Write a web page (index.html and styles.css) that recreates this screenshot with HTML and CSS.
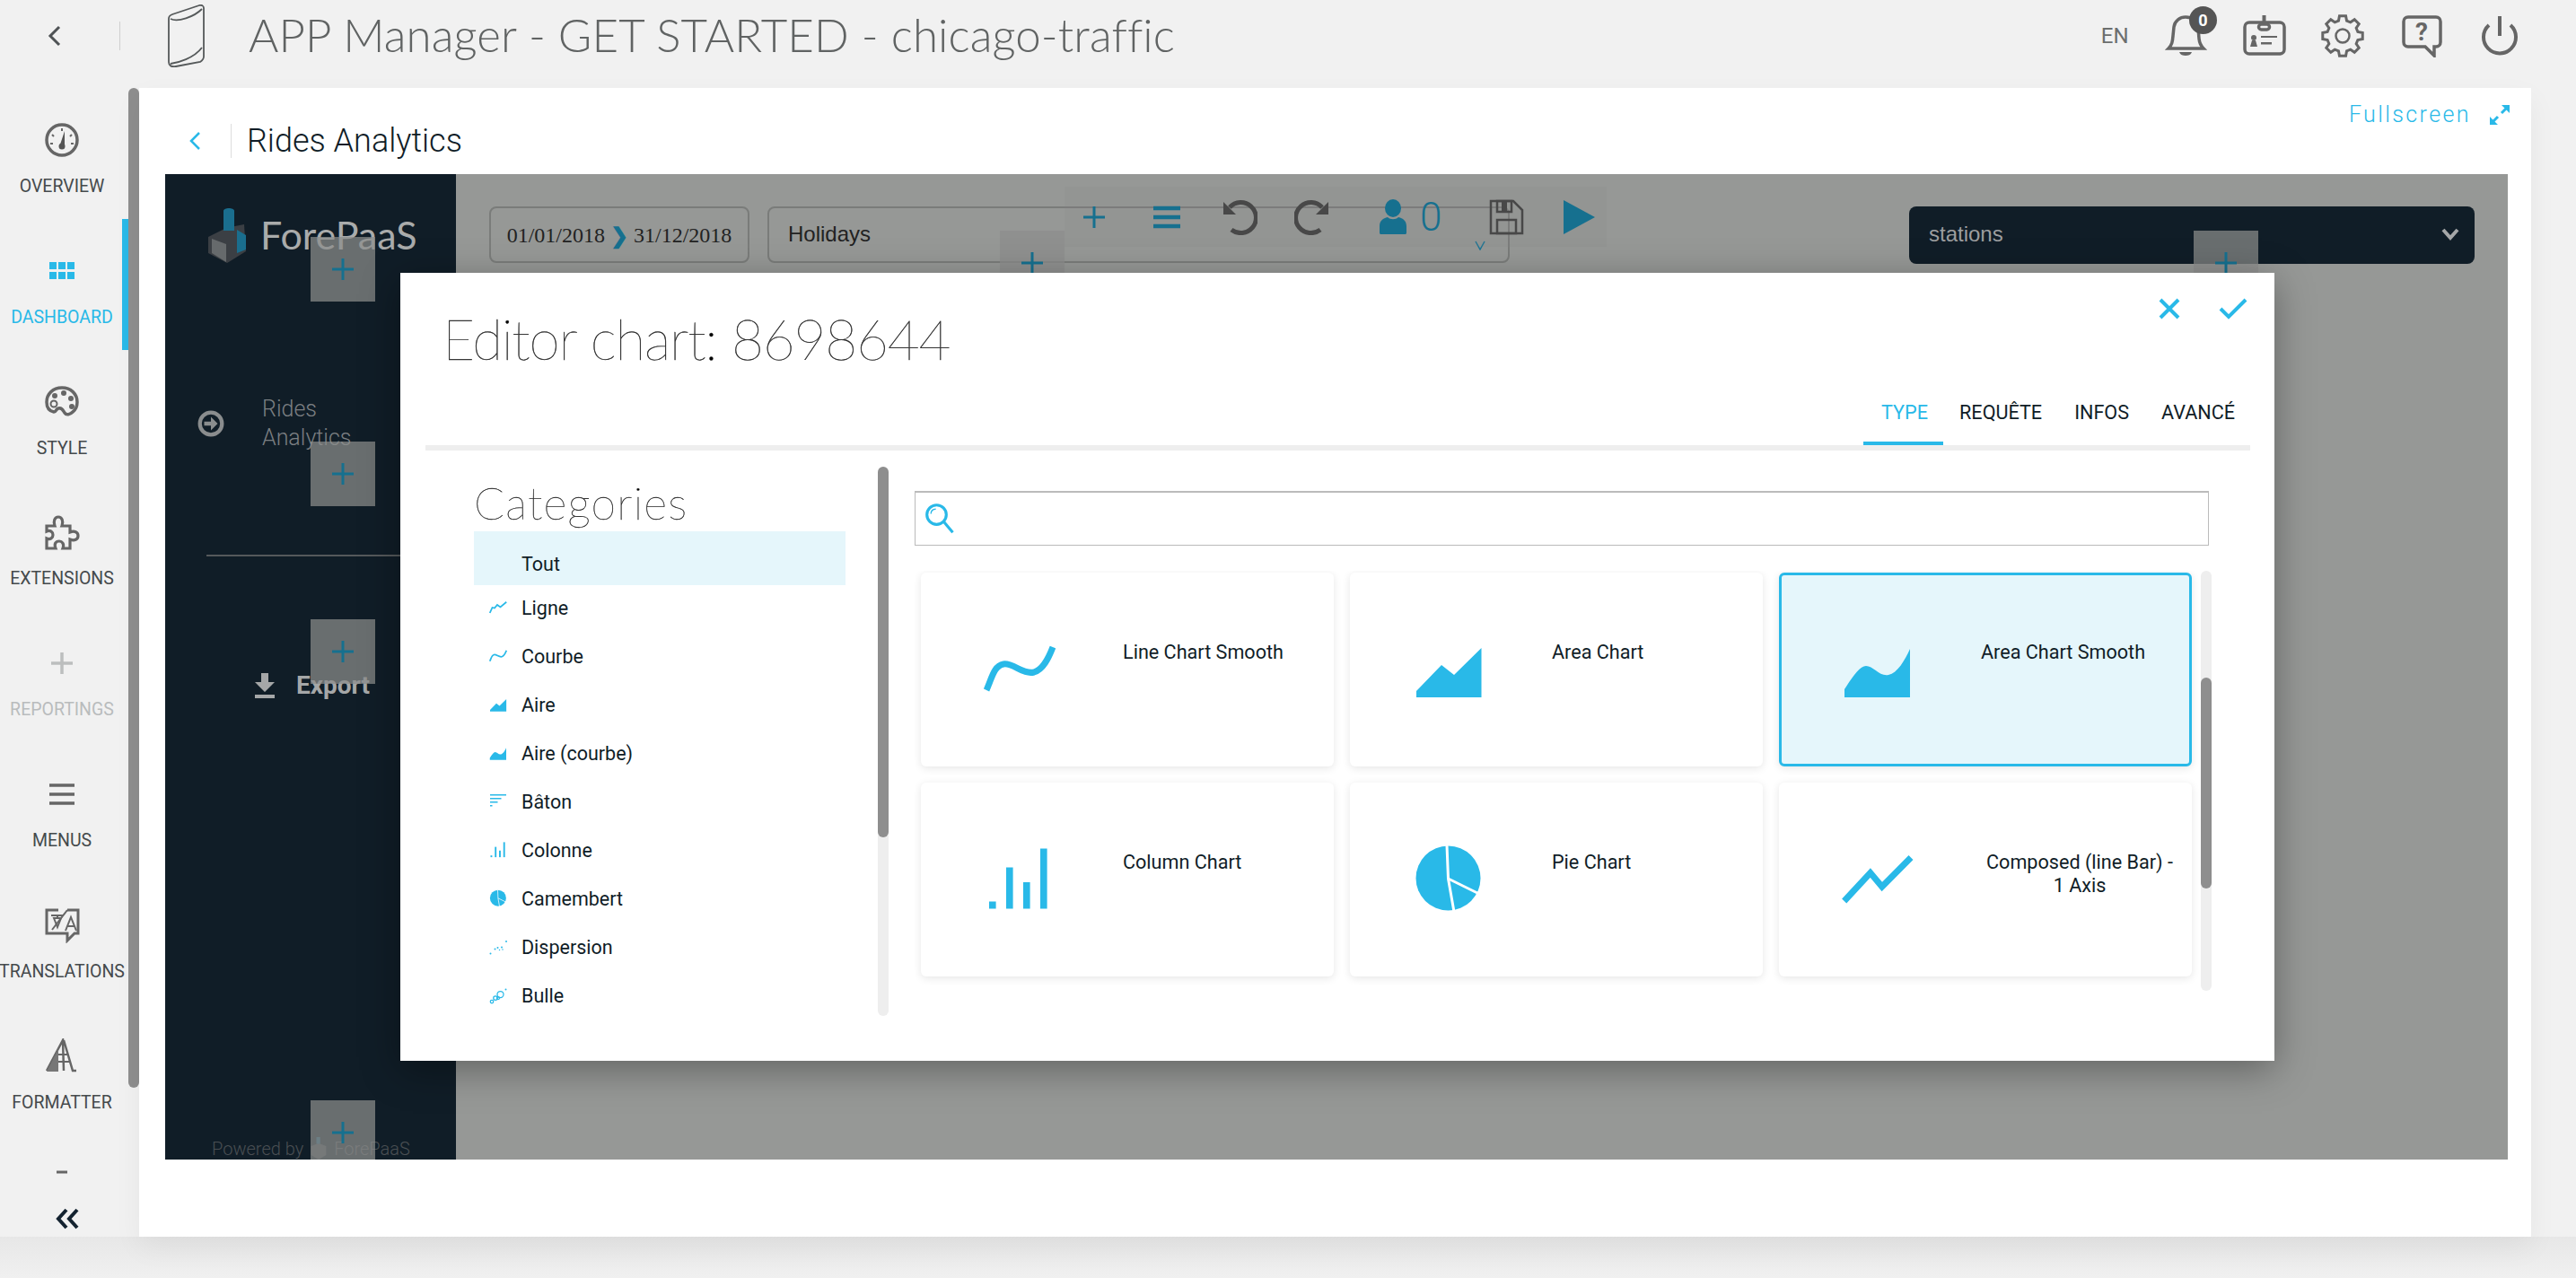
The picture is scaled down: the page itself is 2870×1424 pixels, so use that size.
FILE: index.html
```html
<!DOCTYPE html>
<html lang="en">
<head>
  <meta charset="UTF-8">
  <meta name="viewport" content="width=device-width, initial-scale=1.0">
  <title>APP Manager - GET STARTED - chicago-traffic</title>
  <link rel="stylesheet" href="styles.css">
</head>
<body>

<svg class="sprites" aria-hidden="true">
  <symbol id="c-line" viewBox="0 0 80 80"><polyline points="3,64 14,40 24,42 36,28 50,38 77,15" fill="none" stroke="currentColor" stroke-width="7"/></symbol>
  <symbol id="c-smooth" viewBox="0 0 80 80"><path d="M3 63C9 50 11 36 22 34C32 32 44 46 56 43C66 40 72 28 77 15" fill="none" stroke="currentColor" stroke-width="7"/></symbol>
  <symbol id="c-area" viewBox="0 0 80 80"><polygon points="4,71 4,64 32,35 46,46 76.500,16 76.500,71" fill="currentColor"/></symbol>
  <symbol id="c-area-smooth" viewBox="0 0 80 80"><path d="M3 71V62C12 48 20 36 27 36C35 36 42 48 52 46C62 44 70 30 76 17V71Z" fill="currentColor"/></symbol>
  <symbol id="c-column" viewBox="0 0 80 80"><g fill="currentColor"><rect x="6" y="64.500" width="7.600" height="8"/><rect x="25" y="26.500" width="7.600" height="46"/><rect x="44" y="43" width="7.600" height="29.500"/><rect x="63" y="5.500" width="7.600" height="67"/></g></symbol>
  <symbol id="c-pie" viewBox="0 0 80 80"><circle cx="39.500" cy="38.500" r="36" fill="currentColor"/><polyline points="38,2 39.500,39 46,76" fill="none" stroke="#fff" stroke-width="3"/><line x1="39.500" y1="39" x2="74" y2="56" stroke="#fff" stroke-width="3"/></symbol>
  <symbol id="c-composed" viewBox="0 0 80 80"><polyline points="2.700,64 31.800,32.600 44.800,48 77,15.500" fill="none" stroke="currentColor" stroke-width="7"/></symbol>
  <symbol id="c-bar" viewBox="0 0 80 80"><g fill="currentColor"><rect x="4" y="8" width="72" height="6"/><rect x="4" y="24" width="50" height="6"/><rect x="4" y="40" width="34" height="6"/><rect x="4" y="56" width="10" height="6"/></g></symbol>
  <symbol id="c-scatter" viewBox="0 0 80 80"><g fill="currentColor"><circle cx="6" cy="70" r="4"/><circle cx="26" cy="50" r="4"/><circle cx="38" cy="44" r="4"/><circle cx="46" cy="54" r="3"/><circle cx="56" cy="42" r="4"/><circle cx="60" cy="52" r="3"/><circle cx="76" cy="16" r="4"/></g></symbol>
  <symbol id="c-bubble" viewBox="0 0 80 80"><g fill="none" stroke="currentColor" stroke-width="5"><circle cx="12" cy="68" r="7"/><circle cx="28" cy="52" r="9"/><circle cx="50" cy="36" r="14"/><circle cx="40" cy="52" r="6"/></g><circle cx="74" cy="14" r="4" fill="currentColor"/></symbol>
  <symbol id="i-plus" viewBox="0 0 24 24"><path d="M12 0V24M0 12H24" stroke="currentColor" stroke-width="3" fill="none"/></symbol>
</svg>

<div class="topbar">
  <svg class="top-back" viewBox="0 0 16 24"><path d="M14 2L4 12L14 22" fill="none" stroke="#4f5355" stroke-width="3"/></svg>
  <span class="top-sep"></span>
  <svg class="top-device" viewBox="0 0 43 70"><g fill="none" stroke="#55595a" stroke-width="1.800"><path d="M2 16C2 13 3 12 6 11L36 1C39 0 41 2 41 4V58C41 61 40 62 37 64L10 69C5 70 2 68 2 64Z"/><path d="M4 16C12 20 30 14 39 5M4 66C12 65 30 60 39 48"/></g></svg>
  <h1 class="app-title">APP Manager - GET STARTED - chicago-traffic</h1>
  <div class="top-actions">
    <span class="lang">EN</span>
    <div class="top-icon">
      <svg viewBox="0 0 48 48"><path d="M5 38C9 34 9.500 30 10 24L11 14C12 7 18 3 24 3C32 3 37 8 38 15L39 27C39.500 32 41 35 44 38Z" fill="none" stroke="#666" stroke-width="3.500"/><path d="M17 42H31C30 45 27 46 24 46S18 45 17 42Z" fill="#666"/></svg>
      <span class="badge">0</span>
    </div>
    <div class="top-icon">
      <svg viewBox="0 0 48 48"><g fill="none" stroke="#666" stroke-width="3.500"><rect x="2" y="9" width="44" height="35" rx="5"/><rect x="17.500" y="11" width="12" height="6" rx="3"/></g><g fill="#666"><rect x="21.500" y="1" width="4" height="10"/><circle cx="12" cy="26" r="3"/><path d="M8 36L10 29H14L16 36Z"/><rect x="20" y="24" width="18" height="2"/><rect x="20" y="31" width="12" height="2.500"/></g></svg>
    </div>
    <div class="top-icon">
      <svg viewBox="0 0 48 48"><polygon points="19.470,7.100 20.480,1.780 27.520,1.780 28.530,7.100 32.750,8.840 37.220,5.800 42.200,10.780 39.160,15.250 40.900,19.470 46.220,20.480 46.220,27.520 40.900,28.530 39.160,32.750 42.200,37.220 37.220,42.200 32.750,39.160 28.530,40.900 27.520,46.220 20.480,46.220 19.470,40.900 15.250,39.160 10.780,42.200 5.800,37.220 8.840,32.750 7.100,28.530 1.780,27.520 1.780,20.480 7.100,19.470 8.840,15.250 5.800,10.780 10.780,5.800 15.250,8.840" fill="none" stroke="#666" stroke-width="3"/><circle cx="24" cy="24" r="7.500" fill="none" stroke="#666" stroke-width="2.500"/></svg>
    </div>
    <div class="top-icon">
      <svg viewBox="0 0 48 48"><path d="M9 3H40C43 3 45 5 45 8V31C45 34 43 36 40 36H38V46L28 36H9C6 36 4 34 4 31V8C4 5 6 3 9 3Z" fill="none" stroke="#666" stroke-width="3.500"/><text class="help-mark" x="24" y="29">?</text></svg>
    </div>
    <div class="top-icon">
      <svg viewBox="0 0 48 48"><path d="M12 12A18 18 0 1 0 36 12" fill="none" stroke="#666" stroke-width="4"/><line x1="24" y1="2" x2="24" y2="24" stroke="#666" stroke-width="4"/></svg>
    </div>
  </div>
</div>

<div class="main">
  <nav class="sidenav">
    <div class="nav-list">
      <a class="nav-item">
        <svg viewBox="0 0 40 40"><circle cx="20" cy="20" r="17" fill="none" stroke="#666" stroke-width="3.500"/><path d="M18 25L23 10L23 26Z" fill="#555"/><circle cx="20" cy="27" r="3.500" fill="#555"/><path d="M20 7V10M9 14L11 16M31 14L29 16M7 24H10M33 24H30" stroke="#666" stroke-width="2"/></svg>
        <span>OVERVIEW</span>
      </a>
      <a class="nav-item active">
        <svg viewBox="0 0 40 40"><g fill="#29b9e8"><rect x="6" y="10" width="8" height="8"/><rect x="16" y="10" width="8" height="8"/><rect x="26" y="10" width="8" height="8"/><rect x="6" y="21" width="8" height="8"/><rect x="16" y="21" width="8" height="8"/><rect x="26" y="21" width="8" height="8"/></g></svg>
        <span>DASHBOARD</span>
      </a>
      <a class="nav-item">
        <svg viewBox="0 0 40 40"><path d="M20 4C10 4 3 11 3 20C3 26 6 30 11 31C14 31 13 28 16 27C20 26 21 29 23 32C25 35 29 34 32 31C36 28 37 24 37 20C37 11 30 4 20 4Z" fill="none" stroke="#666" stroke-width="3.500"/><g fill="#666"><circle cx="12" cy="13" r="3"/><circle cx="22" cy="10" r="3"/><circle cx="30" cy="16" r="3"/><circle cx="31" cy="25" r="3"/></g><circle cx="11" cy="22" r="3.500" fill="none" stroke="#666" stroke-width="2"/></svg>
        <span>STYLE</span>
      </a>
      <a class="nav-item">
        <svg viewBox="0 0 40 40"><path d="M3 13H12C10 8 12 3 16 3C20 3 22 8 20 13H29V20C34 18 38 20 38 24C38 28 34 30 29 28V38H21C23 33 20 30 17 30C13 30 11 33 13 38H3V27C7 29 10 26 10 23C10 20 7 17 3 19Z" fill="none" stroke="#666" stroke-width="3.200"/></svg>
        <span>EXTENSIONS</span>
      </a>
      <a class="nav-item off">
        <svg viewBox="0 0 40 40"><path d="M20 8V32M8 20H32" stroke="#bcbebe" stroke-width="3.500"/></svg>
        <span>REPORTINGS</span>
      </a>
      <a class="nav-item">
        <svg viewBox="0 0 40 40"><path d="M6 10H34M6 20H34M6 30H34" stroke="#666" stroke-width="3.500"/></svg>
        <span>MENUS</span>
      </a>
      <a class="nav-item">
        <svg viewBox="0 0 40 40"><path d="M16 3H3V29H26L26 37L34 29H38V3H26" fill="none" stroke="#666" stroke-width="3"/><path d="M8 9H22M15 9V11M9 25L26 3" stroke="#666" stroke-width="2"/><path d="M24 26L30 11L36 26M26 21H34" fill="none" stroke="#666" stroke-width="2"/><path d="M11 12L15 22L19 12Z" fill="none" stroke="#666" stroke-width="2"/></svg>
        <span>TRANSLATIONS</span>
      </a>
      <a class="nav-item">
        <svg viewBox="0 0 40 40"><path d="M3 36L21 2L22 36M22 2L32 36L36 36" fill="none" stroke="#666" stroke-width="2.500"/><path d="M8 26H28M12 18H26" stroke="#666" stroke-width="2"/><path d="M3 37L16 12L16 37" fill="#777"/></svg>
        <span>FORMATTER</span>
      </a>
      <a class="nav-item">
        <svg viewBox="0 0 40 40"><path d="M14 4H26" stroke="#666" stroke-width="3"/></svg>
      </a>
    </div>
    <div class="nav-scroll"></div>
    <svg class="collapse" viewBox="0 0 26 24"><path d="M12 2L3 12L12 22M24 2L15 12L24 22" fill="none" stroke="#142330" stroke-width="4"/></svg>
  </nav>

  <section class="panel">
    <a class="fullscreen">
      Fullscreen
      <svg viewBox="0 0 24 24"><path d="M14 10L20 4M4 20L10 14" stroke="#29b9e8" stroke-width="3"/><path d="M14 1H23V10ZM1 14V23H10Z" fill="#29b9e8"/></svg>
    </a>
    <div class="panel-head">
      <svg class="panel-back" viewBox="0 0 14 24"><path d="M12 3L3 12L12 21" fill="none" stroke="#29b9e8" stroke-width="2.500"/></svg>
      <span class="panel-sep"></span>
      <h2 class="panel-title">Rides Analytics</h2>
    </div>

    <div class="frame">
      <aside class="frame-side">
        <div class="logo">
          <svg viewBox="0 0 46 64"><path d="M22 24L42 20L44 50L23 63L2 52L2 34Z" fill="#3b3f44"/><path d="M19 5C19 1 31 1 31 5V27H19Z" fill="#1a6e8e"/><path d="M34 26L44 32V48L34 52Z" fill="#1a6e8e"/><path d="M6 36L22 42L22 62L6 52Z" fill="#666a6c"/></svg>
          <span class="logo-name">ForePaaS</span>
        </div>
        <div class="side-link">
          <svg viewBox="0 0 28 28"><circle cx="14" cy="14" r="11.500" fill="none" stroke="#8a8d8e" stroke-width="4"/><path d="M7 12H14V7L21 14L14 21V16H7Z" fill="#8a8d8e"/></svg>
          <span>Rides Analytics</span>
        </div>
        <div class="side-rule"></div>
        <div class="export">
          <svg viewBox="0 0 22 28"><path d="M7 0H15V10H22L11 21L0 10H7Z" fill="#a5a7a8"/><rect y="24" width="22" height="4" fill="#a5a7a8"/></svg>
          <span>Export</span>
        </div>
        <div class="powered">
          <span>Powered by</span>
          <svg viewBox="0 0 24 30"><path d="M12 8L22 12V24L12 30L2 24V12Z" fill="#3d4449"/><rect x="9" y="0" width="5" height="9" fill="#1a5a74"/></svg>
          <span>ForePaaS</span>
        </div>
      </aside>

      <div class="frame-main">
        <div class="date-box">01/01/2018 <b>&#10095;</b> 31/12/2018</div>
        <div class="holiday-box">
          <span>Holidays</span>
          <svg viewBox="0 0 12 12"><path d="M1 2L6 11L11 2" fill="none" stroke="#1a7596" stroke-width="1.500"/></svg>
        </div>
        <div class="station-box">
          <span>stations</span>
          <svg viewBox="0 0 20 14"><path d="M2 2L10 11L18 2" fill="none" stroke="#a5a7a8" stroke-width="4"/></svg>
        </div>
      </div>

      <div class="tile tile-logo"><svg><use href="#i-plus"/></svg></div>
      <div class="tile tile-link"><svg><use href="#i-plus"/></svg></div>
      <div class="tile tile-export"><svg><use href="#i-plus"/></svg></div>
      <div class="tile tile-foot"><svg><use href="#i-plus"/></svg></div>
      <div class="tile tile-holiday"><svg><use href="#i-plus"/></svg></div>
      <div class="tile tile-station"><svg><use href="#i-plus"/></svg></div>

      <div class="toolbar">
        <svg class="tool" viewBox="0 0 40 40"><use href="#i-plus" x="8" y="8" width="24" height="24"/></svg>
        <svg class="tool" viewBox="0 0 40 40"><path d="M5 10H35M5 20H35M5 30H35" stroke="#16708f" stroke-width="4.500"/></svg>
        <svg class="tool" viewBox="0 0 40 40"><path d="M9 9A17 17 0 1 1 11 34" fill="none" stroke="#484848" stroke-width="5"/><path d="M2 3V17H16Z" fill="#484848"/></svg>
        <svg class="tool" viewBox="0 0 40 40"><path d="M31 9A17 17 0 1 0 29 34" fill="none" stroke="#484848" stroke-width="5"/><path d="M38 3V17H24Z" fill="#484848"/></svg>
        <div class="tool-users">
          <svg class="tool" viewBox="0 0 40 40"><ellipse cx="20" cy="10" rx="9" ry="10" fill="#16708f"/><path d="M5 37V30C5 24 9 21 14 20C17 23 23 23 26 20C31 21 35 24 35 30V37C35 39 34 39 33 39H7C6 39 5 39 5 37Z" fill="#16708f"/></svg>
          <span>0</span>
        </div>
        <svg class="tool" viewBox="0 0 40 40"><g fill="none" stroke="#484848" stroke-width="2.500"><path d="M3 2H28L38 12V38H3Z"/><rect x="10" y="23" width="21" height="15"/><rect x="10" y="2" width="16" height="12"/></g><rect x="15" y="3" width="6" height="10" fill="#484848"/></svg>
        <svg class="tool" viewBox="0 0 40 40"><path d="M3 1L38 20L3 39Z" fill="#16708f"/></svg>
      </div>

      <div class="modal">
        <div class="modal-actions">
          <svg viewBox="0 0 26 26"><path d="M3 3L23 23M23 3L3 23" stroke="#29b9e8" stroke-width="4"/></svg>
          <svg viewBox="0 0 34 26"><path d="M3 13L12 22L31 3" fill="none" stroke="#29b9e8" stroke-width="4"/></svg>
        </div>
        <h3 class="modal-title">Editor chart: 8698644</h3>
        <div class="tabs">
          <a class="tab current">TYPE</a>
          <a class="tab">REQUÊTE</a>
          <a class="tab">INFOS</a>
          <a class="tab">AVANCÉ</a>
        </div>
        <div class="modal-rule"></div>

        <div class="modal-body">
          <div class="categories">
            <h4 class="cat-title">Categories</h4>
            <ul class="cat-list">
              <li class="cat-row selected"><span class="cat-icon"></span>Tout</li>
              <li class="cat-row"><svg class="cat-icon"><use href="#c-line"/></svg>Ligne</li>
              <li class="cat-row"><svg class="cat-icon"><use href="#c-smooth"/></svg>Courbe</li>
              <li class="cat-row"><svg class="cat-icon"><use href="#c-area"/></svg>Aire</li>
              <li class="cat-row"><svg class="cat-icon"><use href="#c-area-smooth"/></svg>Aire (courbe)</li>
              <li class="cat-row"><svg class="cat-icon"><use href="#c-bar"/></svg>Bâton</li>
              <li class="cat-row"><svg class="cat-icon"><use href="#c-column"/></svg>Colonne</li>
              <li class="cat-row"><svg class="cat-icon"><use href="#c-pie"/></svg>Camembert</li>
              <li class="cat-row"><svg class="cat-icon"><use href="#c-scatter"/></svg>Dispersion</li>
              <li class="cat-row"><svg class="cat-icon"><use href="#c-bubble"/></svg>Bulle</li>
            </ul>
          </div>
          <div class="scrollbar cat-scroll"><div class="thumb"></div></div>

          <div class="charts">
            <div class="search">
              <svg viewBox="0 0 40 40"><circle cx="15" cy="15" r="12" fill="none" stroke="#29b9e8" stroke-width="3.500"/><path d="M8 14C8 10 10 8 14 8" fill="none" stroke="#29b9e8" stroke-width="1.500"/><path d="M24 24L35 37" stroke="#29b9e8" stroke-width="3.500"/></svg>
            </div>
            <div class="chart-scroll">
              <div class="chart-grid">
                <div class="card"><svg class="card-icon"><use href="#c-smooth"/></svg><span class="card-label">Line Chart Smooth</span></div>
                <div class="card"><svg class="card-icon"><use href="#c-area"/></svg><span class="card-label">Area Chart</span></div>
                <div class="card picked"><svg class="card-icon"><use href="#c-area-smooth"/></svg><span class="card-label">Area Chart Smooth</span></div>
                <div class="card"><svg class="card-icon"><use href="#c-column"/></svg><span class="card-label">Column Chart</span></div>
                <div class="card"><svg class="card-icon"><use href="#c-pie"/></svg><span class="card-label">Pie Chart</span></div>
                <div class="card"><svg class="card-icon"><use href="#c-composed"/></svg><span class="card-label">Composed (line Bar) - 1 Axis</span></div>
              </div>
              <div class="scrollbar grid-scroll"><div class="thumb"></div></div>
            </div>
          </div>
        </div>
      </div>
    </div>
  </section>
</div>
<div class="bottom-band"></div>

</body>
</html>
```

FILE: styles.css
```css
* {
  box-sizing: border-box;
}
html, body {
  margin: 0;
  height: 1424px;
  overflow: hidden;
}
body {
  background-color: #f1f1f1;
  font-family: Roboto, "Liberation Sans", sans-serif;
  color: #101d27;
}
h1, h2, h3, h4, ul {
  margin: 0;
  padding: 0;
  font-weight: normal;
}
.sprites {
  position: absolute;
  width: 0;
  height: 0;
}

/* top bar */
.topbar {
  height: 98px;
  padding: 0 61px 18px 52px;
  display: flex;
  align-items: center;
}
.top-back {
  width: 16px;
  height: 24px;
}
.top-sep {
  width: 1px;
  height: 32px;
  margin-left: 65px;
  background-color: #cfcfcf;
}
.top-device {
  width: 43px;
  height: 70px;
  margin-left: 52px;
}
.app-title {
  margin-left: 48px;
  padding-bottom: 2px;
  font-family: Lato, sans-serif;
  font-weight: 300;
  font-size: 51px;
  line-height: 60px;
  letter-spacing: 0.1px;
  color: #606363;
  white-space: nowrap;
}
.top-actions {
  margin-left: auto;
  display: flex;
  align-items: center;
  gap: 39.5px;
}
.lang {
  font-size: 24px;
  color: #6b6e6e;
}
.top-icon {
  position: relative;
  width: 48px;
  height: 48px;
}
.top-icon svg {
  display: block;
  width: 48px;
  height: 48px;
}
.badge {
  position: absolute;
  left: 28px;
  top: -9px;
  width: 31px;
  height: 31px;
  border-radius: 50%;
  background-color: #555;
  color: #fff;
  font-size: 18px;
  font-weight: 700;
  line-height: 31px;
  text-align: center;
}
.help-mark {
  font-family: Roboto, sans-serif;
  font-size: 28px;
  font-weight: 700;
  fill: #666;
  text-anchor: middle;
}

/* left navigation */
.main {
  display: flex;
  height: 1280px;
}
.sidenav {
  position: relative;
  width: 155px;
  flex-shrink: 0;
  display: flex;
  overflow: hidden;
}
.nav-list {
  width: 143px;
}
.nav-item {
  height: 145.8px;
  padding: 38px 0 0 2px;
  border-right: 7px solid transparent;
  display: flex;
  flex-direction: column;
  align-items: center;
  font-size: 19.5px;
  line-height: 22px;
  color: #454a4c;
  white-space: nowrap;
}
.nav-item svg {
  width: 40px;
  height: 40px;
  flex-shrink: 0;
}
.nav-item span {
  margin-top: 21px;
}
.nav-item.active {
  border-right-color: #29b9e8;
  color: #29b9e8;
}
.nav-item.off {
  color: #b9bcbd;
}
.nav-scroll {
  width: 12px;
  height: 1114px;
  border-radius: 6px 6px 6px 6px;
  background-color: #8e8e8e;
}
.collapse {
  position: absolute;
  left: 62px;
  bottom: 8px;
  width: 26px;
  height: 24px;
}

/* white panel */
.panel {
  position: relative;
  width: 2665px;
  padding-left: 29px;
  background-color: #fff;
  box-shadow: 0 12px 30px rgba(0, 0, 0, 0.05);
}
.fullscreen {
  position: absolute;
  right: 23px;
  top: 15px;
  display: flex;
  align-items: center;
  gap: 20px;
  font-size: 25px;
  font-weight: 300;
  letter-spacing: 2.4px;
  color: #29b9e8;
}
.fullscreen svg {
  width: 24px;
  height: 24px;
}
.panel-head {
  height: 96px;
  padding: 22px 0 0 26px;
  display: flex;
  align-items: center;
}
.panel-back {
  width: 14px;
  height: 24px;
}
.panel-sep {
  width: 1px;
  height: 38px;
  margin-left: 33px;
  background-color: #ddd;
}
.panel-title {
  margin-left: 17px;
  font-size: 36px;
  font-weight: 300;
  color: #101d27;
}

/* dashboard behind the editor */
.frame {
  position: relative;
  width: 2610px;
  height: 1098px;
  display: flex;
  overflow: hidden;
  background-color: #969896;
}
.frame-side {
  width: 324px;
  padding-top: 36px;
  display: flex;
  flex-direction: column;
  background-color: #101d27;
}
.logo {
  height: 63px;
  margin-left: 46px;
  display: flex;
  align-items: center;
  gap: 14px;
}
.logo svg {
  width: 46px;
  height: 64px;
}
.logo-name {
  font-family: Lato, sans-serif;
  font-size: 43px;
  font-weight: 400;
  color: #a9abab;
}
.side-link {
  margin: 147px 0 0 36px;
  display: flex;
  align-items: center;
  gap: 42px;
  height: 64px;
  font-size: 25px;
  line-height: 32px;
  font-weight: 300;
  color: #7b7f82;
}
.side-link svg {
  width: 30px;
  height: 30px;
  flex-shrink: 0;
}
.side-link span {
  width: 110px;
}
.side-rule {
  height: 2px;
  margin: 114px 0 0 46px;
  background-color: #55595b;
}
.export {
  margin: 127px 0 0 100px;
  display: flex;
  align-items: center;
  gap: 24px;
  font-size: 28px;
  font-weight: 700;
  color: #a5a7a8;
}
.export svg {
  width: 22px;
  height: 28px;
}
.powered {
  margin: auto 0 0 52px;
  display: flex;
  align-items: center;
  gap: 7px;
  font-size: 20px;
  font-weight: 300;
  color: #4a4f53;
}
.powered svg {
  width: 20px;
  height: 25px;
}
.frame-main {
  flex: 1;
  padding: 36px 37px 0;
  display: flex;
  align-items: flex-start;
}
.date-box, .holiday-box {
  height: 63px;
  border: 2px solid #7a7c7a;
  border-radius: 8px;
  display: flex;
  align-items: center;
  color: #222;
}
.date-box {
  width: 290px;
  padding-top: 2px;
  justify-content: center;
  font-family: "Liberation Serif", serif;
  font-size: 24px;
  gap: 6px;
}
.date-box b {
  color: #16708f;
}
.holiday-box {
  width: 827px;
  margin-left: 20px;
  padding: 0 25px 2px 21px;
  justify-content: space-between;
  font-family: "Liberation Sans", sans-serif;
  font-size: 24px;
}
.holiday-box svg {
  width: 12px;
  height: 12px;
  margin: 24px 0 0 0;
}
.station-box {
  width: 630px;
  height: 64px;
  margin-left: 445px;
  padding: 0 17px 2px 22px;
  border-radius: 8px;
  display: flex;
  align-items: center;
  justify-content: space-between;
  background-color: #101d27;
  font-family: "Liberation Sans", sans-serif;
  font-size: 24px;
  color: #9c9e9f;
}
.station-box svg {
  width: 20px;
  height: 14px;
}

/* drop targets, they lie over the dashboard */
.tile {
  position: absolute;
  width: 72px;
  height: 72px;
  display: flex;
  align-items: center;
  justify-content: center;
  background-color: rgba(140, 142, 140, 0.72);
  color: #16708f;
}
.tile svg {
  width: 24px;
  height: 24px;
}
.tile-logo { left: 162px; top: 70px; }
.tile-link { left: 162px; top: 298px; }
.tile-export { left: 162px; top: 496px; }
.tile-foot { left: 162px; top: 1032px; }
.tile-holiday { left: 930px; top: 63px; }
.tile-station { left: 2260px; top: 63px; }

.toolbar {
  position: absolute;
  left: 1002px;
  top: 14px;
  width: 604px;
  height: 67px;
  padding-left: 13px;
  display: flex;
  align-items: center;
  gap: 41px;
  background-color: rgba(130, 132, 130, 0.12);
  color: #16708f;
}
.tool {
  width: 40px;
  height: 40px;
  flex-shrink: 0;
}
.tool-users {
  width: 70px;
  margin: 0 15px 0 9px;
  display: flex;
  align-items: center;
  gap: 10px;
  font-size: 44px;
  font-weight: 300;
  line-height: 40px;
}

/* editor modal */
.modal {
  position: absolute;
  left: 262px;
  top: 110px;
  width: 2088px;
  height: 878px;
  background-color: #fff;
  box-shadow: 0 10px 40px rgba(0, 0, 0, 0.35);
}
.modal-actions {
  position: absolute;
  right: 29px;
  top: 27px;
  display: flex;
  align-items: center;
  gap: 41px;
}
.modal-actions svg {
  height: 26px;
}
.modal-actions svg:first-child {
  width: 26px;
}
.modal-actions svg:last-child {
  width: 34px;
}
.modal-title {
  height: 130px;
  padding: 33px 0 0 47px;
  font-family: Lato, sans-serif;
  font-weight: 100;
  font-size: 62px;
  line-height: 80px;
  letter-spacing: -1.2px;
  color: #000;
  -webkit-text-stroke: 0.4px #333;
}
.tabs {
  height: 62px;
  padding-right: 26px;
  display: flex;
  justify-content: flex-end;
  font-size: 21.6px;
}
.tab {
  padding: 13px 18px 0;
  color: #101d27;
}
.tab.current {
  width: 89px;
  padding-left: 20px;
  border-bottom: 4px solid #29b9e8;
  color: #29b9e8;
}
.modal-rule {
  height: 6px;
  margin: 0 27px 0 28px;
  background-color: #eee;
}
.modal-body {
  padding-left: 82px;
  display: flex;
  align-items: flex-start;
}
.categories {
  width: 414px;
}
.cat-title {
  height: 90px;
  padding-top: 25px;
  font-family: Lato, sans-serif;
  font-weight: 100;
  font-size: 50px;
  line-height: 66px;
  letter-spacing: 1.2px;
  color: #000;
  -webkit-text-stroke: 0.3px #333;
}
.cat-list {
  list-style: none;
}
.cat-row {
  height: 54px;
  padding-left: 17px;
  display: flex;
  align-items: center;
  gap: 16px;
  font-size: 21.5px;
  color: #101d27;
}
.cat-row.selected {
  height: 60px;
  margin-bottom: -2px;
  padding-top: 12px;
  background-color: #e5f6fb;
}
.cat-icon {
  width: 20px;
  height: 20px;
  color: #29b9e8;
}
.scrollbar {
  width: 12px;
  border-radius: 6px;
  background-color: #eee;
}
.thumb {
  border-radius: 6px;
  background-color: #8e8e8e;
}
.cat-scroll {
  height: 612px;
  margin: 18px 0 0 36px;
}
.cat-scroll .thumb {
  height: 413px;
}
.charts {
  width: 1445px;
  margin-left: 29px;
}
.search {
  width: 1442px;
  height: 61px;
  margin-top: 45px;
  padding: 11px 0 0 10px;
  border: 1px solid #bbb;
  border-top-width: 2px;
}
.search svg {
  width: 36px;
  height: 36px;
  display: block;
}
.chart-scroll {
  height: 468px;
  margin-top: 28px;
  padding-left: 7px;
  display: flex;
  overflow: hidden;
}
.chart-grid {
  width: 1416px;
  padding-top: 2px;
  display: grid;
  grid-template-columns: repeat(3, 460px);
  grid-auto-rows: 216px;
  gap: 18px;
}
.card {
  padding: 68px 0 0 70px;
  display: flex;
  align-items: flex-start;
  border-radius: 6px;
  background-color: #fff;
  box-shadow: 0 2px 10px rgba(0, 0, 0, 0.1);
}
.card.picked {
  border: 3px solid #29b9e8;
  padding: 65px 0 0 67px;
  background-color: #e5f6fb;
}
.card-icon {
  width: 80px;
  height: 80px;
  flex-shrink: 0;
  color: #29b9e8;
}
.card-label {
  margin: 8px 0 0 75px;
  width: fit-content;
  max-width: 220px;
  font-size: 21.6px;
  line-height: 26px;
  text-align: center;
}
.grid-scroll {
  height: 468px;
  margin-left: 10px;
  flex-shrink: 0;
}
.grid-scroll .thumb {
  height: 235px;
  position: relative;
  top: 119px;
}

.bottom-band {
  height: 46px;
  background: linear-gradient(to bottom, #e7e7e7, #f0f0f0);
}
```
